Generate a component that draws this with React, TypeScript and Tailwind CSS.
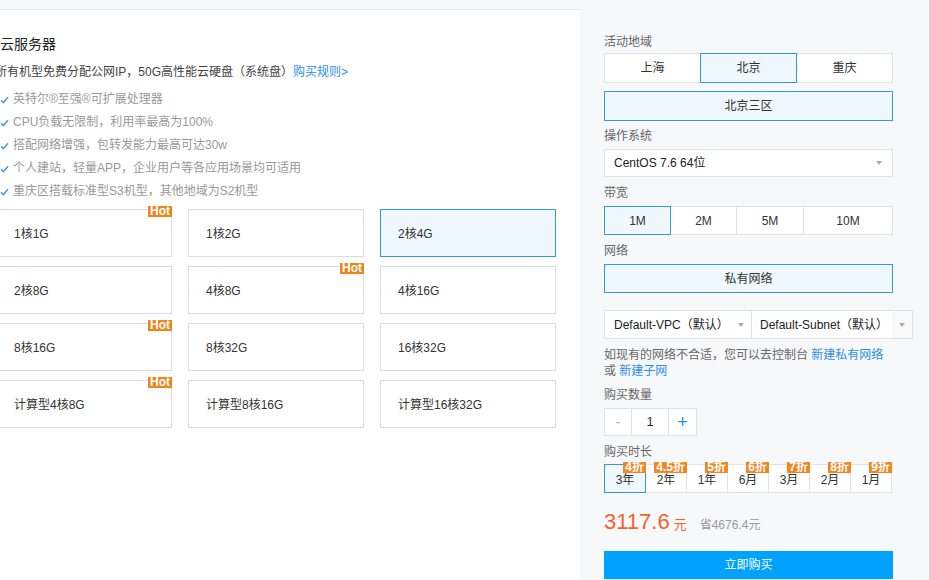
import { useState } from 'react'

const features = [
  '英特尔®至强®可扩展处理器',
  'CPU负载无限制，利用率最高为100%',
  '搭配网络增强，包转发能力最高可达30w',
  '个人建站，轻量APP，企业用户等各应用场景均可适用',
  '重庆区搭载标准型S3机型，其他地域为S2机型',
]

const specs = [
  { name: '1核1G', hot: true },
  { name: '1核2G' },
  { name: '2核4G' },
  { name: '2核8G' },
  { name: '4核8G', hot: true },
  { name: '4核16G' },
  { name: '8核16G', hot: true },
  { name: '8核32G' },
  { name: '16核32G' },
  { name: '计算型4核8G', hot: true },
  { name: '计算型8核16G' },
  { name: '计算型16核32G' },
]

const regions = ['上海', '北京', '重庆']
const bandwidths = [
  { v: '1M', w: 'w-[67px]' },
  { v: '2M', w: 'w-[67px]' },
  { v: '5M', w: 'w-[68px]' },
  { v: '10M', w: 'w-[90px]' },
]
const durations = [
  { v: '3年', off: '4折' },
  { v: '2年', off: '4.5折' },
  { v: '1年', off: '5折' },
  { v: '6月', off: '6折' },
  { v: '3月', off: '7折' },
  { v: '2月', off: '8折' },
  { v: '1月', off: '9折' },
]

function Check() {
  return (
    <svg width="9" height="8" viewBox="0 0 9 8" className="shrink-0">
      <path d="M1 4.2 L3.4 6.6 L8 1.2" fill="none" stroke="#3d9fe6" strokeWidth="1.5" />
    </svg>
  )
}

function Caret() {
  return <span className="w-0 h-0 border-x-[3.5px] border-x-transparent border-t-[4px] border-t-[#aaa]" />
}

function Label({ children, className = '' }: { children: React.ReactNode; className?: string }) {
  return <div className={`text-[12px] leading-[18px] text-[#666] ${className}`}>{children}</div>
}

export default function App() {
  const [spec, setSpec] = useState('2核4G')
  const [region, setRegion] = useState('北京')
  const [bw, setBw] = useState('1M')
  const [dur, setDur] = useState('3年')
  const [qty, setQty] = useState(1)

  return (
    <div className="flex h-[580px] w-[929px] overflow-hidden bg-[#f7f8fa] font-['Liberation_Sans','Noto_Sans_CJK_SC',sans-serif]">
      {/* left: spec list */}
      <div className="w-[580px] shrink-0 flex flex-col">
        <div className="h-[9px] shrink-0" />
        <div className="flex-1 bg-white border-t border-[#e6e6e6] pt-[24px]">
          <div className="ml-[-4px] w-[560px]">
            <h1 className="ml-[4px] text-[14px] leading-[20px] text-[#222]">云服务器</h1>
            <p className="mt-[8px] text-[12px] leading-[20px] text-[#444] ml-[-1px] whitespace-nowrap">
              所有机型免费分配公网IP，50G高性能云硬盘（系统盘）
              <a className="text-[#2b8fe6] cursor-pointer">购买规则&gt;</a>
            </p>
            <ul className="mt-[6px] ml-[4px]">
              {features.map(f => (
                <li key={f} className="flex items-center gap-[4px] text-[12px] leading-[23px] text-[#999]">
                  <Check />
                  <span>{f}</span>
                </li>
              ))}
            </ul>
            <div className="mt-[6px] grid grid-cols-[176px_176px_176px] gap-x-[16px] gap-y-[9px]">
              {specs.map(s => {
                const active = s.name === spec
                return (
                  <button
                    key={s.name}
                    onClick={() => setSpec(s.name)}
                    className={`relative h-[48px] border text-left pl-[17px] pt-[1px] text-[12px] text-[#333] ${
                      active ? 'border-[#2d9de2] bg-[#eef8fe]' : 'border-[#dcdcdc] bg-white'
                    }`}
                  >
                    {s.name}
                    {s.hot && (
                      <span className="absolute right-[-1px] top-[-4px] h-[11px] px-[2px] bg-[#ef8419] text-white text-[12px] leading-[11px] font-bold">
                        Hot
                      </span>
                    )}
                  </button>
                )
              })}
            </div>
          </div>
        </div>
      </div>

      {/* right: order form */}
      <div className="flex-1 pl-[24px] pt-[33px]">
        <div className="w-[289px]">
          <Label>活动地域</Label>
          <div className="mt-[2px] flex">
            {regions.map((r, i) => (
              <button
                key={r}
                onClick={() => setRegion(r)}
                className={`relative w-[97px] h-[30px] border text-[12px] text-[#333] ${i > 0 ? 'ml-[-1px]' : ''} ${
                  region === r ? 'z-10 border-[#2d9de2] bg-[#eef8fe]' : 'border-[#e2e2e2] bg-white'
                }`}
              >
                {r}
              </button>
            ))}
          </div>
          <div className="mt-[8px] h-[30px] border border-[#2d9de2] bg-[#eef8fe] flex items-center justify-center text-[12px] text-[#333]">
            北京三区
          </div>

          <Label className="mt-[6px]">操作系统</Label>
          <div className="mt-[4px] h-[28px] border border-[#e2e2e2] bg-white flex items-center justify-between pl-[9px] pr-[10px] text-[12px] text-[#222]">
            <span>CentOS 7.6 64位</span>
            <Caret />
          </div>

          <Label className="mt-[7px]">带宽</Label>
          <div className="mt-[4px] flex">
            {bandwidths.map((b, i) => (
              <button
                key={b.v}
                onClick={() => setBw(b.v)}
                className={`relative ${b.w} h-[29px] border text-[12px] text-[#333] ${i > 0 ? 'ml-[-1px]' : ''} ${
                  bw === b.v ? 'z-10 border-[#2d9de2] bg-[#eef8fe]' : 'border-[#e2e2e2] bg-white'
                }`}
              >
                {b.v}
              </button>
            ))}
          </div>

          <Label className="mt-[7px]">网络</Label>
          <div className="mt-[4px] h-[29px] border border-[#2d9de2] bg-[#eef8fe] flex items-center justify-center text-[12px] text-[#333]">
            私有网络
          </div>

          <div className="mt-[17px] flex h-[29px] w-[309px] text-[12px] text-[#222] whitespace-nowrap">
            <div className="w-[148px] border border-[#e2e2e2] bg-white flex items-center justify-between pl-[9px] pr-[7px]">
              <span>Default-VPC（默认）</span>
              <Caret />
            </div>
            <div className="ml-[-1px] flex-1 border border-[#e2e2e2] flex items-center">
              <span className="h-full flex-1 bg-white flex items-center pl-[8px]">Default-Subnet（默认）</span>
              <span className="h-full w-[20px] bg-[#f9f9f9] flex items-center justify-center">
                <Caret />
              </span>
            </div>
          </div>

          <p className="mt-[8px] text-[12px] leading-[16px] text-[#666]">
            如现有的网络不合适，您可以去控制台 <a className="text-[#2b8fe6] cursor-pointer">新建私有网络</a>
            <br />或 <a className="text-[#2b8fe6] cursor-pointer">新建子网</a>
          </p>

          <Label className="mt-[7px]">购买数量</Label>
          <div className="mt-[4px] flex h-[28px]">
            <button
              onClick={() => setQty(q => Math.max(1, q - 1))}
              className="w-[28px] border border-[#e2e2e2] bg-white text-[#aaa] text-[14px]"
            >
              -
            </button>
            <div className="ml-[-1px] w-[38px] border border-[#e2e2e2] bg-white flex items-center justify-center text-[13px] text-[#333]">
              {qty}
            </div>
            <button
              onClick={() => setQty(q => q + 1)}
              className="ml-[-1px] w-[29px] border border-[#e2e2e2] bg-white text-[#2b8fe6] text-[18px] leading-none"
            >
              +
            </button>
          </div>

          <Label className="mt-[7px]">购买时长</Label>
          <div className="mt-[3px] flex">
            {durations.map((d, i) => (
              <button
                key={d.v}
                onClick={() => setDur(d.v)}
                className={`relative w-[42px] h-[29px] border text-[12px] text-[#333] pt-[2px] ${i > 0 ? 'ml-[-1px]' : ''} ${
                  dur === d.v ? 'z-10 border-[#2d9de2] bg-[#eef8fe]' : 'border-[#e2e2e2] bg-white'
                }`}
              >
                {d.v}
                <span className="absolute right-[-1px] top-[-3px] h-[11px] px-[2px] bg-[#f3861e] text-white text-[12px] leading-[11px] font-bold z-20 whitespace-nowrap">
                  {d.off}
                </span>
              </button>
            ))}
          </div>

          <div className="mt-[15px] flex items-baseline h-[28px]">
            <span className="text-[22px] leading-[28px] text-[#f5612b]">3117.6</span>
            <span className="ml-[4px] text-[13px] text-[#f5612b]">元</span>
            <span className="ml-[13px] text-[12px] text-[#999]">省4676.4元</span>
          </div>

          <button className="mt-[15px] w-full h-[28px] bg-[#00a2ff] text-white text-[12px]">立即购买</button>
        </div>
      </div>
    </div>
  )
}
